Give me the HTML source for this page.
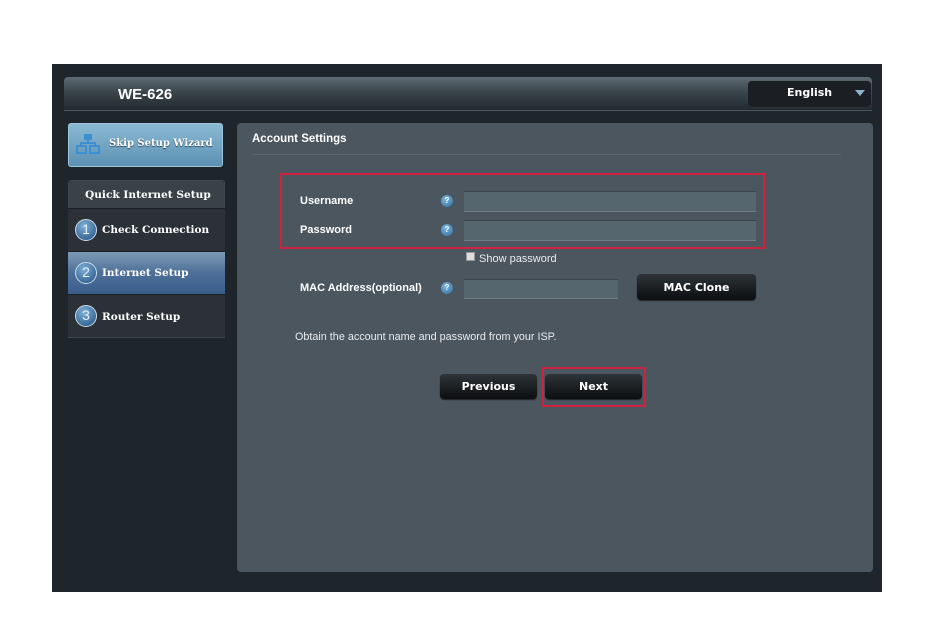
<!DOCTYPE html>
<html><head><style>
*{margin:0;padding:0;box-sizing:border-box}
body{width:931px;height:642px;background:#fff;position:relative;overflow:hidden;font-family:"Liberation Sans",sans-serif}
.a{position:absolute}
.b{font-weight:bold;color:#fff}
.serif{font-family:"DejaVu Serif","Liberation Serif",serif;font-weight:bold;color:#fff;font-size:10.8px}
.btn{background:linear-gradient(#2e3438,#0c0e10);border-radius:4px;color:#fff;font-weight:bold;font-size:11px;display:flex;align-items:center;justify-content:center;font-family:"DejaVu Sans",sans-serif;box-shadow:0 1px 1px #222}
.inp{background:#56666f;border-top:1px solid #3a454c;border-bottom:1px solid #6d7c85}
.q{width:12px;height:12px;border-radius:50%;background:radial-gradient(circle at 40% 35%,#7fb8e0,#2d6a9c);color:#fff;font-size:8px;font-weight:bold;text-align:center;line-height:12px}
.num{width:22px;height:22px;border-radius:50%;border:1.5px solid #c9dbe8;background:radial-gradient(circle at 40% 30%,#7fb0d8,#1f4f80);color:#e8f0f7;font-size:14px;text-align:center;line-height:19px}
.item{left:68px;width:157px;height:43px;border-top:1px solid #1a1f22}
</style></head><body>
<div class="a" style="left:52px;top:64px;width:830px;height:528px;background:#1e262c"></div>
<div class="a" style="left:64px;top:77px;width:808px;height:34px;background:linear-gradient(#5e6b73,#3a454c 45%,#222a30);border-radius:4px 4px 0 0;border-bottom:1px solid #4a565e"></div>
<div class="a b" style="left:118px;top:86px;font-size:15px">WE-626</div>
<div class="a" style="left:748px;top:81px;width:123px;height:26px;background:#1b1f23;border-radius:4px;box-shadow:0 0 1px #555"></div>
<div class="a b" style="left:787px;top:86px;font-size:11px;font-family:'DejaVu Sans',sans-serif">English</div>
<div class="a" style="left:855px;top:90px;width:0;height:0;border-left:5px solid transparent;border-right:5px solid transparent;border-top:6px solid #8fb3cc"></div>

<div class="a" style="left:68px;top:123px;width:155px;height:44px;background:linear-gradient(#8bb9d3,#5b91b3);border-radius:3px;border:1px solid #9cc6dc"></div>
<svg class="a" style="left:76px;top:133px" width="24" height="22"><rect x="8" y="1" width="8" height="6" fill="#3d8fd0"/><rect x="1" y="13" width="9" height="7" fill="none" stroke="#3d8fd0" stroke-width="2"/><rect x="14" y="13" width="9" height="7" fill="none" stroke="#3d8fd0" stroke-width="2"/><path d="M12 7v3M5 13v-3h14v3" stroke="#3d8fd0" stroke-width="2" fill="none"/></svg>
<div class="a serif" style="left:109px;top:138px;font-size:10px;text-shadow:0 1px 1px #345">Skip Setup Wizard</div>

<div class="a" style="left:68px;top:180px;width:157px;height:158px;background:#2a3035;border-radius:3px 3px 0 0;border:1px solid #3e474d"></div>
<div class="a" style="left:69px;top:181px;width:155px;height:27px;background:#3a4247;border-radius:3px 3px 0 0"></div>
<div class="a serif" style="left:85px;top:189px;font-size:10.6px">Quick Internet Setup</div>
<div class="a item" style="top:208px;background:#2b3136"></div>
<div class="a item" style="top:251px;background:linear-gradient(#7d9ab6,#4d6f98 50%,#3b5d8c)"></div>
<div class="a item" style="top:294px;background:#2b3136"></div>
<div class="a num" style="left:75px;top:219px">1</div>
<div class="a serif" style="left:102px;top:224px;font-size:10.5px">Check Connection</div>
<div class="a num" style="left:75px;top:262px">2</div>
<div class="a serif" style="left:102px;top:267px;font-size:10.5px">Internet Setup</div>
<div class="a num" style="left:75px;top:305px">3</div>
<div class="a serif" style="left:102px;top:311px;font-size:10.5px">Router Setup</div>

<div class="a" style="left:237px;top:123px;width:636px;height:449px;background:#4b565f;border-radius:4px"></div>
<div class="a b" style="left:252px;top:133px;font-size:11.5px">Account Settings</div>
<div class="a" style="left:252px;top:154px;width:589px;height:1px;background:#2f383e;border-bottom:1px solid #5a666e"></div>

<div class="a" style="left:280px;top:173px;width:485px;height:76px;border:2px solid #d0223f"></div>
<div class="a b" style="left:300px;top:195px;font-size:11px">Username</div>
<div class="a q" style="left:441px;top:195px">?</div>
<div class="a inp" style="left:464px;top:191px;width:292px;height:21px"></div>
<div class="a b" style="left:300px;top:224px;font-size:11px">Password</div>
<div class="a q" style="left:441px;top:224px">?</div>
<div class="a inp" style="left:464px;top:220px;width:292px;height:21px"></div>
<div class="a" style="left:466px;top:252px;width:9px;height:9px;background:#ddd;border:1px solid #999"></div>
<div class="a" style="left:479px;top:253px;font-size:11px;color:#e8ecef">Show password</div>
<div class="a b" style="left:300px;top:282px;font-size:11px">MAC Address(optional)</div>
<div class="a q" style="left:441px;top:282px">?</div>
<div class="a inp" style="left:464px;top:279px;width:154px;height:20px"></div>
<div class="a btn" style="left:637px;top:274px;width:119px;height:26px">MAC Clone</div>
<div class="a" style="left:295px;top:331px;font-size:10.8px;color:#e8ecef">Obtain the account name and password from your ISP.</div>
<div class="a btn" style="left:440px;top:374px;width:97px;height:25px">Previous</div>
<div class="a btn" style="left:545px;top:374px;width:97px;height:25px">Next</div>
<div class="a" style="left:542px;top:367px;width:104px;height:40px;border:2px solid #d0223f"></div>
</body></html>
